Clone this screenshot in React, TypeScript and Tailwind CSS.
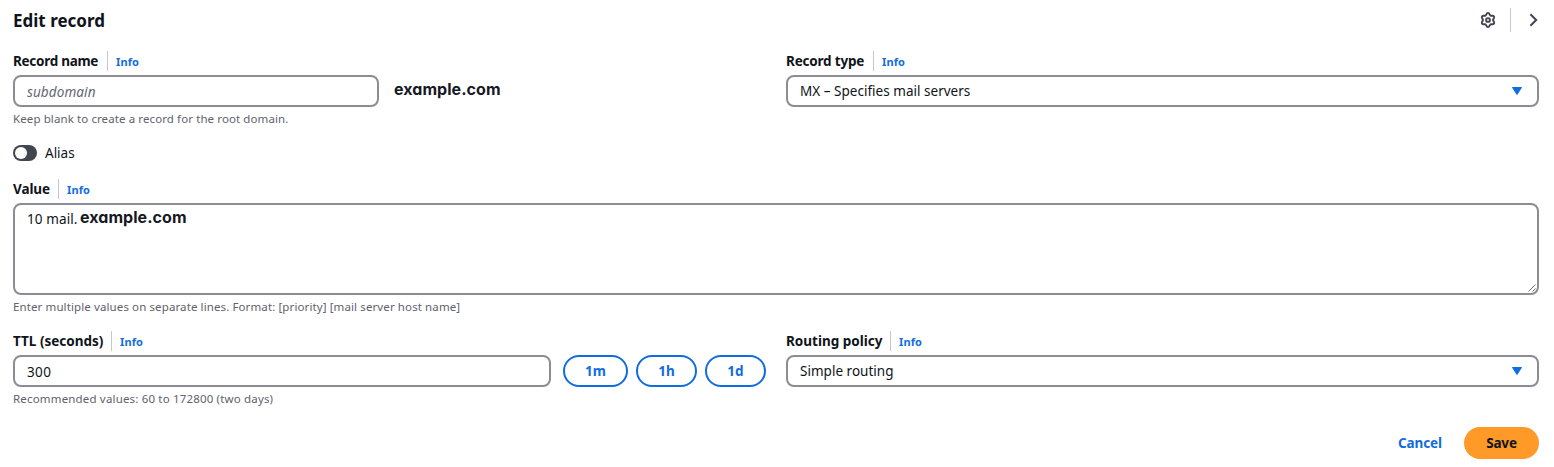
import React from "react";

function Label({ text, className }: { text: string; className: string }) {
  return (
    <div className="flex h-5 items-center">
      <span className={"shrink-0 whitespace-nowrap text-[13.5px] font-bold leading-5 " + className}>{text}</span>
      <span className="mr-2 h-5 w-px bg-[#c6c6cd]" />
      <a className="pt-[2px] text-[11px] font-bold leading-[18px] tracking-[0.1px] text-[#116ce1]">Info</a>
    </div>
  );
}

function Hint({ children, className }: { children: React.ReactNode; className: string }) {
  return <p className={"mt-1 h-4 text-[11.5px] leading-4 text-[#5f626b] " + className}>{children}</p>;
}

function Select({ value }: { value: string }) {
  return (
    <div className="mt-1 flex h-8 items-center justify-between rounded-lg border-2 border-[#8c8c94] pr-[14px] pl-3 text-[13.5px]">
      <span className="leading-5 tracking-[0.02px]">{value}</span>
      <svg width="12" height="10" viewBox="0 0 12 10" fill="#116ce1" stroke="#116ce1" strokeLinejoin="round">
        <path d="M1.5 1.5h9L6 8.5z" />
      </svg>
    </div>
  );
}

function Preset({ label, className }: { label: string; className: string }) {
  return (
    <button
      className={
        "h-8 shrink-0 rounded-full border-2 border-[#116ce1] text-[13.5px] font-bold leading-5 text-[#116ce1] " + className
      }
    >
      {label}
    </button>
  );
}

function Domain({ className }: { className: string }) {
  return (
    <span
      className={
        "font-[Inter] text-[16px] font-bold leading-5 tracking-[0.05px] text-[#16191f] [font-feature-settings:'cv11'] " +
        className
      }
    >
      example.com
    </span>
  );
}

export default function App() {
  return (
    <main className="h-[467px] bg-white pr-[15px] pl-[13px] font-['Noto_Sans',sans-serif] text-[#0f141a]">
      <header className="flex h-[51px] items-start justify-between">
        <h1 className="pt-[9px] text-[17px] font-bold leading-6">Edit record</h1>
        <div className="-mr-[2px] flex items-center pt-2">
          <svg
            width="16"
            height="16"
            viewBox="0 0 16 16"
            fill="none"
            stroke="#424650"
            strokeWidth="1.9"
            strokeLinejoin="round"
            className="mr-[14px]"
          >
            <path d="M8 1C9.7 1 9.72 3.22 10.5 3.67C11.28 4.12 13.21 3.03 14.06 4.5C14.91 5.97 13 7.1 13 8C13 8.9 14.91 10.03 14.06 11.5C13.21 12.97 11.28 11.88 10.5 12.33C9.72 12.78 9.7 15 8 15C6.3 15 6.28 12.78 5.5 12.33C4.72 11.88 2.79 12.97 1.94 11.5C1.09 10.03 3 8.9 3 8C3 7.1 1.09 5.97 1.94 4.5C2.79 3.03 4.72 4.12 5.5 3.67C6.28 3.22 6.3 1 8 1Z" />
            <circle cx="8" cy="8" r="1.9" />
          </svg>
          <span className="h-6 w-px bg-[#c6c6cd]" />
          <svg
            width="16"
            height="16"
            viewBox="0 0 16 16"
            fill="none"
            stroke="#424650"
            strokeWidth="2"
            className="ml-[14px]"
          >
            <path d="m5.4 2.2 5.8 5.8-5.8 5.8" />
          </svg>
        </div>
      </header>

      <section className="grid h-32 grid-cols-2 gap-x-5">
        <div>
          <Label text="Record name" className="w-[94px] tracking-[-0.28px]" />
          <div className="mt-1 flex h-8">
            <input
              placeholder="subdomain"
              className="h-8 w-[366px] rounded-lg border-2 border-[#8c8c94] px-3 pt-px text-[13.5px] placeholder:italic placeholder:tracking-[0.1px] placeholder:text-[#656871]"
            />
            <Domain className="ml-[15px] mt-1" />
          </div>
          <Hint className="tracking-[0.1px]">Keep blank to create a record for the root domain.</Hint>
          <div className="mt-[17px] flex h-[18px] items-center gap-2">
            <span className="flex h-4 w-6 items-center rounded-full bg-[#424650] pl-[2px]">
              <span className="size-3 rounded-full bg-white" />
            </span>
            <span className="text-[13.5px] leading-5">Alias</span>
          </div>
        </div>
        <div>
          <Label text="Record type" className="w-[87px] tracking-[-0.2px]" />
          <Select value="MX – Specifies mail servers" />
        </div>
      </section>

      <section className="h-[152px]">
        <Label text="Value" className="w-[45px] tracking-[-0.1px]" />
        <div className="relative mt-1 flex h-[92px] items-start rounded-lg border-2 border-[#8c8c94] pt-1 pl-3">
          <span className="w-[53px] text-[13.5px] leading-5 tracking-[0.1px]">10 mail.</span>
          <Domain className="-mt-[2px]" />
          <svg
            width="9"
            height="9"
            viewBox="0 0 9 9"
            stroke="#6b6b70"
            strokeWidth="1"
            className="absolute right-0 bottom-0"
          >
            <path d="M0.5 7.5l7-7M4.5 7.5l3-3" />
          </svg>
        </div>
        <Hint className="tracking-[0.11px]">
          Enter multiple values on separate lines. Format: [priority] [mail server host name]
        </Hint>
      </section>

      <section className="grid h-24 grid-cols-2 gap-x-5">
        <div>
          <Label text="TTL (seconds)" className="w-[98px]" />
          <div className="mt-1 flex h-8">
            <input
              defaultValue="300"
              className="mr-3 h-8 w-[538px] rounded-lg border-2 border-[#8c8c94] px-3 pt-px text-[13.5px] tracking-[0.4px]"
            />
            <Preset label="1m" className="mr-2 w-[65px]" />
            <Preset label="1h" className="mr-2 w-[61px]" />
            <Preset label="1d" className="w-[61px]" />
          </div>
          <Hint className="tracking-[0.17px]">Recommended values: 60 to 172800 (two days)</Hint>
        </div>
        <div>
          <Label text="Routing policy" className="w-[104px]" />
          <Select value="Simple routing" />
        </div>
      </section>

      <footer className="flex h-8 items-center justify-end">
        <button className="mr-[22px] text-[13.5px] font-bold leading-5 tracking-[-0.1px] text-[#116ce1]">Cancel</button>
        <button className="h-8 w-[75px] rounded-full bg-[#ff9927] text-[13.5px] font-bold tracking-[-0.2px]">Save</button>
      </footer>
    </main>
  );
}
